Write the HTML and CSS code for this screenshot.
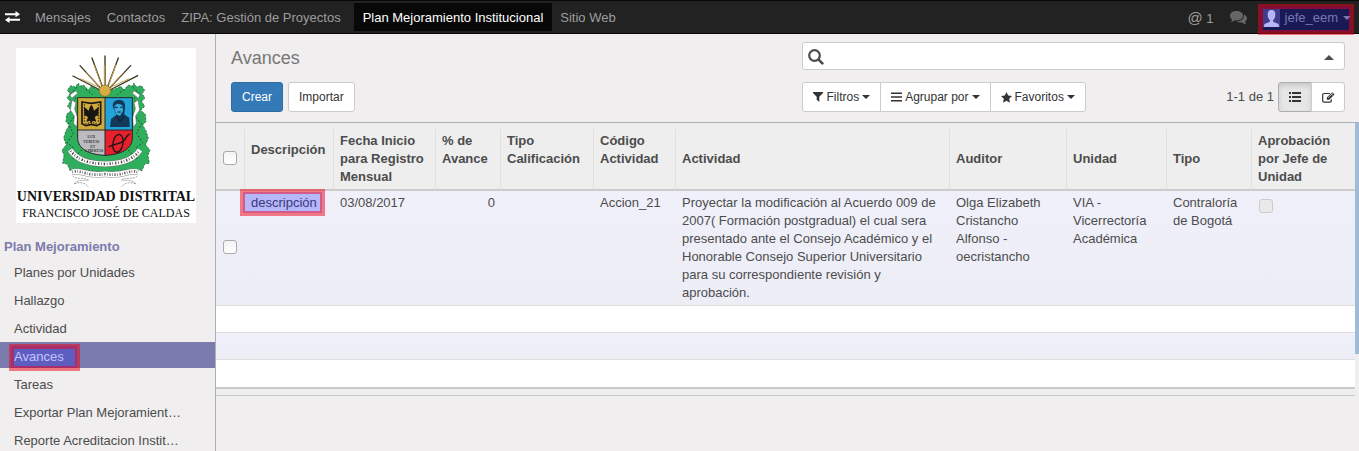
FILE: index.html
```html
<!DOCTYPE html>
<html lang="es">
<head>
<meta charset="utf-8">
<title>Avances</title>
<link rel="stylesheet" href="styles.css">
</head>
<body>
<nav class="navbar">
  <button class="apps" type="button" aria-label="Aplicaciones">
    <svg width="15" height="12" viewBox="0 0 15 12" fill="#fff"><path d="M0 2.2h10.5V0L15 3.2 10.500 6.200V4.200H0zM15 7.800H4.500V5.800L0 9l4.500 3V9.800H15z"/></svg>
  </button>
  <a class="menu-link" href="#">Mensajes</a>
  <a class="menu-link" href="#">Contactos</a>
  <a class="menu-link" href="#">ZIPA: Gestión de Proyectos</a>
  <a class="menu-link active" href="#">Plan Mejoramiento Institucional</a>
  <a class="menu-link" href="#">Sitio Web</a>
  <div class="systray">
    <a class="mentions" href="#"><span class="at">@</span> 1</a>
    <a class="chat" href="#" aria-label="Conversaciones">
      <svg width="17" height="14" viewBox="0 0 17 14" fill="#666"><path d="M6.500 0C10.200 0 13 2 13 4.700S10.200 9.400 6.500 9.400L4.800 9.200C3.600 10.200 2.200 10.800.8 10.900 1.500 10.200 2 9.300 2.100 8.400.8 7.600 0 6.200 0 4.700 0 2 2.800 0 6.500 0z"/><path d="M14 3.500c1.800.8 3 2.200 3 3.800 0 1.300-.8 2.500-2 3.300.1.900.5 1.700 1.300 2.500-1.500-.1-2.900-.7-4-1.700-2 .4-4.300 0-5.800-1 4.300 0 7.700-2.300 7.500-6.900z"/></svg>
    </a>
    <button class="user marked" type="button">
      <svg width="17" height="18" viewBox="0 0 17 18"><path fill="#555064" d="M0 0h17v18H0z"/><path fill="#eeeff5" d="M8.500 1C5.600 1 4.500 3 4.700 6c.1 2.500 1 4.300 2.200 5.200v1.600L1.500 15 .8 18h15.400l-.7-3-5.400-2.200v-1.600c1.200-.9 2.100-2.700 2.200-5.200.2-3-.9-5-3.800-5z"/></svg>
      <span>jefe_eem</span><span class="caret"></span>
    </button>
  </div>
</nav>
<div class="page">
  <aside class="sidebar">
    <figure class="logo">
      <svg class="crest" viewBox="-102 -6 540 420" role="img" aria-label="Escudo">
        <g stroke="#3a3520" stroke-width="4" stroke-linecap="round">
          <path d="M165 118V18M160 118L126 24M155 118L90 47M150 120L69 78M170 118l35-94M175 118l67-71M180 120l83-43"/>
        </g>
        <g stroke="#c8a24a" stroke-width="3"><path d="M163 105V45M154 105L132 44M146 107L108 67M176 105l22-61M184 107l37-40M148 112L92 86M182 112l56-26"/></g>
        <path fill="#2fae5d" stroke="#174d2c" stroke-width="2" stroke-dasharray="7 4" d="M146 119l-23-10-8 12-14-16-12 4-4-10-9 12-14-4-10 14 8 10-9 13 10 10-9 15 12 12-14 12-2 22 10 10-10 17-7 22 8 20-13 17 6 15-4 24 14 2 8 20 18-4 14 10 18-8 28 5 30 7 30-7 28-5 18 8 14-10 18 4 8-20 14-2-4-24 6-15-13-17 8-20-7-22-10-17 10-10-2-22-14-12 12-12-9-15 10-10-9-13 8-10-10-14-14 4-9-12-4 10-12-4-14 16-8-12-23 10z"/>
        <g fill="none" stroke="#0d4726" stroke-width="3" stroke-dasharray="5 6"><path d="M80 112l-18 20 15 12-12 28 10 26-20 24 15 28-18 28 22 18M250 112l18 20-15 12 12 28-10 26 20 24-15 28 18 28-22 18M108 118l20 16M222 118l-20 16M95 300l-30 30M235 300l30 30"/></g>
        <g fill="#fff" stroke="#555" stroke-width="1.500"><path d="M66 150l12 8-4 18 8 26-2 30-9-12 2-22-12-18zM264 150l-12 8 4 18-8 26 2 30 9-12-2-22 12-18z"/><path d="M60 134l18-12 5 8-18 15zM270 134l-18-12-5 8 18 15z"/></g>
        <path fill="#d2a93d" d="M83 143h82v97H83z"/>
        <path fill="#22a3dc" d="M165 143h82v97h-82z"/>
        <path fill="#bcbcc0" d="M83 240h82v76c-50-2-80-20-82-50z"/>
        <path fill="#e7202b" d="M165 240h82v26c-2 30-32 48-82 50z"/>
        <path fill="none" stroke="#262626" stroke-width="3" d="M83 143h164v123c-2 30-32 48-82 50-50-2-80-20-82-50zM165 143v173M83 240h164"/>
        <path fill="#d2a93d" stroke="#1c1910" stroke-width="5" d="M96 156l28 4 28-4v65l-12 6-16-4-16 4-12-6z"/>
        <path fill="#171613" d="M124 164l5 8 3 10 14-12-1 25-11 6 5 14-11-3-4 11-4-11-11 3 5-14-11-6-1-25 14 12 3-10z"/>
        <path fill="none" stroke="#171613" stroke-width="3" stroke-dasharray="4 4" d="M103 163v54M145 163v54M106 222l18-5 18 5"/>
        <path fill="#123a58" d="M188 168c0-13 10-19 20-18 12 0 19 8 17 23l-2 20 15 11 1 27h-59l3-24 16-12z"/>
        <path fill="#38a9dc" d="M194 166l10-5 13 4 2 18-9 14-10-3-6-14z"/>
        <path stroke="#0c1724" stroke-width="3" fill="none" d="M195 171l8 2M211 172l6-1M203 186h9M199 199l12 15 11-16"/>
        <g class="motto" text-anchor="middle"><text x="124" y="264">LUX</text><text x="124" y="279">VERITAS</text><text x="128" y="293">ET</text><text x="133" y="307">LIBERTAS</text></g>
        <g fill="none" stroke="#171717" stroke-width="4"><ellipse cx="204" cy="280" rx="15" ry="27" transform="rotate(10 204 280)"/><path d="M176 291c18-12 35-5 48-22 6-8 7-15 15-17"/></g>
        <circle cx="165" cy="122" r="17" fill="#d9ad43" stroke="#8a6a1c" stroke-width="2"/>
        <g fill="none"><path stroke="#777" stroke-width="18" d="M60 300c20 28 48 40 105 42 57-2 85-14 105-42"/><path stroke="#fff" stroke-width="15" d="M60 300c20 28 48 40 105 42 57-2 85-14 105-42"/><path stroke="#444" stroke-width="8" stroke-dasharray="2 6 4 5" d="M62 303c20 25 48 37 103 39 55-2 83-14 103-39"/>
        <path stroke="#888" stroke-width="18" d="M66 366c30-8 42 15 99 6 57 9 69-14 99-6"/><path stroke="#fff" stroke-width="15" d="M66 366c30-8 42 15 99 6 57 9 69-14 99-6"/><path stroke="#666" stroke-width="8" stroke-dasharray="2 5 4 4" d="M67 366c30-8 42 15 98 6 56 9 68-14 98-6"/>
        <path stroke="#777" stroke-width="2" stroke-dasharray="6 3" d="M68 378c10 12 35 3 48 12-12 2-34-2-44 12 12-5 32-8 44 10M262 378c-10 12-35 3-48 12 12 2 34-2 44 12-12-5-32-8-44 10"/></g>
      </svg>
      <figcaption><strong>UNIVERSIDAD DISTRITAL</strong><span>FRANCISCO JOSÉ DE CALDAS</span></figcaption>
    </figure>
    <h2>Plan Mejoramiento</h2>
    <ul class="side-menu">
      <li><a href="#">Planes por Unidades</a></li>
      <li><a href="#">Hallazgo</a></li>
      <li><a href="#">Actividad</a></li>
      <li><a class="current" href="#"><span class="marked">Avances</span></a></li>
      <li><a href="#">Tareas</a></li>
      <li><a href="#">Exportar Plan Mejoramient…</a></li>
      <li><a href="#">Reporte Acreditacion Instit…</a></li>
    </ul>
  </aside>
  <main>
    <header class="control">
      <div class="left">
        <h1>Avances</h1>
        <div class="actions"><button class="btn primary" type="button">Crear</button><button class="btn" type="button">Importar</button></div>
      </div>
      <div class="right">
        <div class="search">
          <svg width="16" height="16" viewBox="0 0 16 16" fill="none" stroke="#4c4c4c"><circle cx="6.500" cy="6.500" r="5.300" stroke-width="2.200"/><path stroke-width="2.600" stroke-linecap="round" d="M10.800 10.800l3.600 3.600"/></svg>
          <input type="text" aria-label="Buscar">
          <button class="toggle" type="button" aria-label="Búsqueda avanzada"><span class="caret up"></span></button>
        </div>
        <div class="tools">
          <div class="group">
            <button class="btn" type="button"><svg width="10" height="10" viewBox="0 0 10 10" fill="#333"><path d="M0 0h10v1L6.300 4.800V10L3.700 7.800v-3L0 1z"/></svg>Filtros<span class="caret"></span></button>
            <button class="btn" type="button"><svg width="11" height="10" viewBox="0 0 11 10" fill="#333"><path d="M0 .5h11V2H0zM0 4.200h11v1.500H0zM0 8h11v1.500H0z"/></svg>Agrupar por<span class="caret"></span></button>
            <button class="btn" type="button"><svg width="11" height="11" viewBox="0 0 11 11" fill="#333"><path d="M5.500 0l1.700 3.600 3.800.5-2.800 2.700.7 3.900-3.400-1.900-3.400 1.900.7-3.900L0 4.100l3.800-.5z"/></svg>Favoritos<span class="caret"></span></button>
          </div>
          <span class="pager">1-1 de 1</span>
          <div class="group views">
            <button class="btn on" type="button" aria-label="Lista"><svg width="12" height="10" viewBox="0 0 12 10" fill="#333"><path d="M0 0h2v2H0zM0 4h2v2H0zM0 8h2v2H0zM3 0h9v2H3zM3 4h9v2H3zM3 8h9v2H3z"/></svg></button>
            <button class="btn" type="button" aria-label="Formulario"><svg width="13" height="11" viewBox="0 0 13 11"><path d="M8 1.500H2A1.300 1.300 0 0 0 .7 2.800v6A1.300 1.300 0 0 0 2 10.100h6a1.300 1.300 0 0 0 1.300-1.300V7.300" fill="none" stroke="#333" stroke-width="1.200"/><path fill="#333" d="M10.200.2l2.300 2.300-5.300 5.300H4.800V5.500z"/><path stroke="#fff" stroke-width=".7" d="M6 5.800l4.500-4.400M9 1.700l2 2"/></svg></button>
          </div>
        </div>
      </div>
    </header>
    <div class="list">
      <div class="table-wrap">
      <table>
        <colgroup><col class="c-check"><col class="c-desc"><col class="c-date"><col class="c-pct"><col class="c-cal"><col class="c-code"><col><col class="c-aud"><col class="c-unit"><col class="c-type"><col class="c-apr"></colgroup>
        <thead><tr>
          <th><input type="checkbox" aria-label="Seleccionar todo"></th>
          <th class="sort">Descripción</th><th>Fecha Inicio para Registro Mensual</th><th class="sort">% de Avance</th><th class="sort">Tipo Calificación</th><th class="sort">Código Actividad</th><th>Actividad</th><th>Auditor</th><th>Unidad</th><th>Tipo</th><th>Aprobación por Jefe de Unidad</th>
        </tr></thead>
        <tbody>
          <tr class="record">
            <td><input type="checkbox" aria-label="Seleccionar"></td>
            <td><span class="marked">descripción</span></td><td>03/08/2017</td><td class="num">0</td><td></td><td>Accion_21</td>
            <td>Proyectar la modificación al Acuerdo 009 de 2007( Formación postgradual) el cual sera presentado ante el Consejo Académico y el Honorable Consejo Superior Universitario para su correspondiente revisión y aprobación.</td>
            <td>Olga Elizabeth Cristancho Alfonso - oecristancho</td><td>VIA - Vicerrectoría Académica</td><td>Contraloría de Bogotá</td>
            <td><input type="checkbox" disabled aria-label="Aprobación por Jefe de Unidad"></td>
          </tr>
          <tr><td colspan="11"></td></tr>
          <tr><td colspan="11"></td></tr>
          <tr><td colspan="11"></td></tr>
        </tbody>
        <tfoot><tr><td colspan="11"></td></tr></tfoot>
      </table>
      </div>
      <div class="scroll"></div>
    </div>
  </main>
</div>
</body>
</html>
```
FILE: styles.css
```css
* { box-sizing: border-box; }
body {
  margin: 0;
  height: 100vh;
  display: flex;
  flex-direction: column;
  overflow: hidden;
  background: #f0eeee;
  color: #4c4c4c;
  font: 13px/18px "Liberation Sans", Arial, sans-serif;
}
a { color: inherit; text-decoration: none; }
button, input { font: inherit; color: inherit; }
svg { display: block; flex: none; }

.navbar {
  display: flex;
  align-items: center;
  flex: none;
  height: 34px;
  background: #222;
  border: solid #080808;
  border-width: 1px 0;
  color: #9d9d9d;
}
.apps { padding: 0 7px 0 5px; border: 0; background: none; }
.menu-link { padding: 6px 8px 4px; white-space: nowrap; }
.menu-link.active { margin-left: 5px; padding: 6px 9px 4px; background: #080808; color: #fff; }
.systray { display: flex; align-items: center; gap: 16px; margin-left: auto; padding: 2px 8px 0 0; }
.at { font-size: 15px; }
.user {
  display: flex;
  align-items: center;
  gap: 5px;
  padding: 0;
  border: 0;
  background: none;
  color: #9d9d9d;
}

.caret {
  display: inline-block;
  border: 4px solid transparent;
  border-top-color: currentColor;
  border-bottom: 0;
}
.caret.up { border: 5px solid transparent; border-bottom-color: #4c4c4c; border-top: 0; }

/* Highlight frame: translucent fill with a thicker red outline */
.marked { position: relative; }
.marked::before, .marked::after { content: ""; position: absolute; pointer-events: none; }
.marked::before { inset: -3px -13px -4px -3px; background: rgba(0, 0, 255, .24); }
.marked::after { inset: -5px -16px -7px -5px; border: 5px solid rgba(240, 0, 20, .5); }
.user.marked::before { inset: -3px 0 -5px -3px; }
.user.marked::after { inset: -5px -3px -8px -5px; }
td .marked::before { inset: -3px -5px -3px -8px; }
td .marked::after { inset: -6px -8px -6px -11px; }

.page { display: flex; flex: 1; min-height: 0; }
.sidebar { flex: none; width: 216px; border-right: 1px solid #afafb6; overflow: hidden; }
.logo { width: 180px; margin: 14px 0 15px 16px; padding-bottom: 2px; background: #fff; }
.crest { width: 180px; height: 140px; }
.motto { font: bold 11px "Liberation Serif", serif; fill: #333; }
figcaption {
  display: flex;
  flex-direction: column;
  align-items: center;
  padding-top: 1px;
  font: 12px/16px "Liberation Serif", serif;
  color: #111;
  white-space: nowrap;
}
figcaption strong { font-size: 14px; }
.sidebar h2 { margin: 0; padding: 0 4px 2px; font-size: 13px; line-height: 18px; color: #7c7bad; }
.side-menu { display: grid; gap: 2px; margin: 0; padding: 0; list-style: none; }
.side-menu a { display: block; padding: 6px 14px 2px; white-space: nowrap; }
.side-menu .current { background: #7c7bad; color: #fff; }

main { flex: 1; min-width: 0; }
.control {
  display: flex;
  justify-content: space-between;
  height: 89px;
  padding: 8px 14px 0 15px;
  border-bottom: 1px solid #afafb6;
}
h1 { margin: 0 0 8px; font-size: 18px; line-height: 32px; font-weight: 400; color: #777; }
.actions { display: flex; gap: 5px; }
.btn {
  display: flex;
  align-items: center;
  gap: 3px;
  padding: 5px 10px;
  border: 1px solid #ccc;
  border-radius: 3px;
  background: #fff;
  color: #333;
  font-size: 12px;
  line-height: 18px;
}
.btn.primary { background: #337ab7; border-color: #2e6da4; color: #fff; }
.right { width: 48.7%; }
.search {
  display: flex;
  align-items: center;
  height: 28px;
  padding: 2px 5px 0;
  border: 1px solid #ccc;
  border-radius: 3px;
  background: #fff;
}
.search input { flex: 1; min-width: 0; height: 20px; border: 0; outline: 0; background: none; }
.toggle { display: flex; padding: 5px; border: 0; background: none; }
.tools { display: flex; align-items: center; margin-top: 12px; }
.group { display: flex; }
.group .btn + .btn { margin-left: -1px; }
.group .btn:not(:first-child) { border-top-left-radius: 0; border-bottom-left-radius: 0; }
.group .btn:not(:last-child) { border-top-right-radius: 0; border-bottom-right-radius: 0; }
.pager { margin-left: auto; padding-right: 4px; }
.views .btn { width: 34px; height: 30px; justify-content: center; }
.views .on { background: #e6e6e6; border-color: #adadad; box-shadow: inset 0 3px 5px rgba(0, 0, 0, .125); }

.list { display: flex; align-items: flex-start; }
.table-wrap { flex: 1; min-width: 0; padding-top: 6px; background: #eee; }
.scroll { flex: none; width: 4px; height: 231px; background: #9fbbd5; }
table { width: 100%; table-layout: fixed; border-collapse: separate; border-spacing: 0; }
.c-check { width: 28px; }
.c-desc { width: 89px; }
.c-date { width: 102px; }
.c-pct { width: 65px; }
.c-cal { width: 93px; }
.c-code { width: 82px; }
.c-aud { width: 117px; }
.c-unit { width: 100px; }
.c-type { width: 85px; }
.c-apr { width: 104px; }
th { height: 62px; padding: 3px 6px; border-left: 1px solid #dfdfdf; border-bottom: 2px solid #cacaca; text-align: left; vertical-align: middle; }
th:first-child { border-left: 0; }
th.sort::after { content: ""; display: block; height: 18px; }
td { height: 27px; padding: 3px 5px 3px 7px; border-bottom: 1px solid #ddd; vertical-align: top; }
th:first-child, .record td:first-child { padding: 0 0 2px 7px; vertical-align: middle; }
tbody tr { background: #fff; }
tbody tr:nth-child(odd) { background: linear-gradient(#f0f0fa, #ededf6); }
tbody tr:last-child td { height: 29px; border-bottom: 2px solid #cacaca; }
tfoot td { height: 7px; padding: 0; border-bottom: 1px solid #cacaca; }
.num { text-align: right; }
input[type="checkbox"] {
  appearance: none;
  display: block;
  width: 14px;
  height: 14px;
  margin: 0;
  border: 1px solid #aaa;
  border-radius: 3px;
  background: linear-gradient(#f4f4f4, #fff);
}
td:last-child input[type="checkbox"] { margin: 5px 1px; }
input[type="checkbox"]:disabled { border-color: #ccc; background: #e9e9e9; }
```
